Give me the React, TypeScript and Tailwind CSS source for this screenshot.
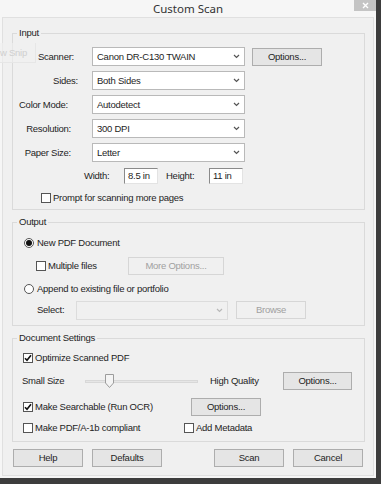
import React from "react";

type BoxProps = { checked?: boolean };

const CheckBox = ({ checked }: BoxProps) => (
	<span className="w-[10px] h-[10px] border border-[#555] bg-white flex items-center justify-center shrink-0">
		{checked && (
			<svg width="8" height="8" viewBox="0 0 8 8">
				<path d="M1 4.2 L3 6.3 L7 1.2" fill="none" stroke="#111" strokeWidth="1.6" />
			</svg>
		)}
	</span>
);

const Radio = ({ checked }: BoxProps) => (
	<span className="w-[10px] h-[10px] rounded-full border border-[#555] bg-white flex items-center justify-center shrink-0">
		{checked && <span className="w-[6px] h-[6px] rounded-full bg-[#111]" />}
	</span>
);

const Chevron = ({ muted }: { muted?: boolean }) => (
	<svg width="7" height="5" viewBox="0 0 7 5">
		<path d="M1 1 L3.5 3.5 L6 1" fill="none" stroke={muted ? "#b8b8b8" : "#555"} strokeWidth="1.2" />
	</svg>
);

const Select = ({ value, width, disabled }: { value: string; width: string; disabled?: boolean }) => (
	<div
		className={`${width} h-[19px] flex items-center justify-between pl-[4px] pr-[4px] border ${
			disabled ? "border-[#dcdcdc] bg-[#f0f0f0]" : "border-[#b9b9b9] bg-white"
		}`}
	>
		<span>{value}</span>
		<Chevron muted={disabled} />
	</div>
);

const Button = ({ label, width, disabled }: { label: string; width: string; disabled?: boolean }) => (
	<div
		className={`${width} h-[18px] flex items-center justify-center border ${
			disabled ? "border-[#d6d6d6] bg-[#f0f0f0] text-[#a0a0a0]" : "border-[#adadad] bg-[#e5e5e5] text-[#1e1e1e]"
		}`}
	>
		{label}
	</div>
);

const Group = ({ title, height, children }: { title: string; height: string; children: React.ReactNode }) => (
	<div className={`relative ${height} border border-[#dadada] flex flex-col`}>
		<span className="absolute -top-[8px] left-[4px] px-[2px] bg-[#f0f0f0] leading-[14px]">{title}</span>
		{children}
	</div>
);

const rows = [
	{ label: "Scanner:", value: "Canon DR-C130 TWAIN", pr: "pr-[18px]" },
	{ label: "Sides:", value: "Both Sides", pr: "pr-[14px]" },
	{ label: "Color Mode:", value: "Autodetect", pr: "pr-[24px]" },
	{ label: "Resolution:", value: "300 DPI", pr: "pr-[21px]" },
	{ label: "Paper Size:", value: "Letter", pr: "pr-[21px]" },
];

const App = () => {
	return (
		<div className="w-[381px] h-[484px] relative overflow-hidden flex flex-col bg-[#f6f6f6] border-r-[5px] border-b-[6px] border-[#3d3d3d] text-[9.5px] leading-[12px] text-[#1e1e1e] font-['Liberation_Sans','Noto_Sans',sans-serif] tracking-[-0.25px] whitespace-nowrap">
			<div className="h-[17px] relative flex items-center justify-center">
				<span className="text-[11.5px] text-[#333] tracking-normal font-['Noto_Sans',sans-serif]">Custom Scan</span>
				<div className="absolute right-0 top-0 w-[22px] h-[11px] bg-[#c4c4c4] flex items-center justify-center">
					<svg width="7" height="7" viewBox="0 0 7 7">
						<path d="M1 1 L6 6 M6 1 L1 6" stroke="#fff" strokeWidth="1.4" />
					</svg>
				</div>
			</div>

			<div className="flex-1 mx-[2px] mb-[2px] border border-[#e0e0e0] bg-[#f0f0f0] flex flex-col pl-[9px] pr-[8px]">
				{/* Input */}
				<div className="mt-[15px]">
					<Group title="Input" height="h-[177px]">
						<div className="pt-[13px] flex flex-col">
							{rows.map((r, i) => (
								<div key={r.label} className="flex items-center h-[19px] mb-[5px]">
									<span className={`w-[79px] text-right ${r.pr}`}>{r.label}</span>
									<Select value={r.value} width="w-[153px]" />
									{i === 0 && (
										<div className="ml-[7px]">
											<Button label="Options..." width="w-[70px]" />
										</div>
									)}
								</div>
							))}
							<div className="flex items-center h-[16px] mt-[1px]">
								<span className="ml-[71px] w-[40px]">Width:</span>
								<div className="w-[34px] h-[16px] bg-white border border-[#e3e3e3] border-t-[#8a8a8a] border-l-[#8a8a8a] pl-[3px] flex items-center">
									8.5 in
								</div>
								<span className="ml-[8px] w-[43px]">Height:</span>
								<div className="w-[34px] h-[16px] bg-white border border-[#e3e3e3] border-t-[#8a8a8a] border-l-[#8a8a8a] pl-[3px] flex items-center">
									11 in
								</div>
							</div>
							<div className="flex items-center gap-[2px] h-[12px] mt-[8px] ml-[28px]">
								<CheckBox />
								<span>Prompt for scanning more pages</span>
							</div>
						</div>
					</Group>
				</div>

				{/* Output */}
				<div className="mt-[12px]">
					<Group title="Output" height="h-[104px]">
						<div className="pt-[14px] flex flex-col">
							<div className="flex items-center gap-[3px] h-[12px] ml-[11px]">
								<Radio checked />
								<span>New PDF Document</span>
							</div>
							<div className="flex items-center h-[18px] mt-[8px] ml-[23px]">
								<CheckBox />
								<span className="ml-[2px] w-[80px]">Multiple files</span>
								<Button label="More Options..." width="w-[96px]" disabled />
							</div>
							<div className="flex items-center gap-[3px] h-[12px] mt-[8px] ml-[11px]">
								<Radio />
								<span>Append to existing file or portfolio</span>
							</div>
							<div className="flex items-center h-[18px] mt-[6px] ml-[24px]">
								<span className="w-[39px]">Select:</span>
								<Select value="" width="w-[152px]" disabled />
								<div className="ml-[8px]">
									<Button label="Browse" width="w-[70px]" disabled />
								</div>
							</div>
						</div>
					</Group>
				</div>

				{/* Document Settings */}
				<div className="mt-[12px]">
					<Group title="Document Settings" height="h-[104px]">
						<div className="pt-[13px] flex flex-col">
							<div className="flex items-center gap-[2px] h-[12px] ml-[10px]">
								<CheckBox checked />
								<span>Optimize Scanned PDF</span>
							</div>
							<div className="flex items-center h-[18px] mt-[8px] ml-[9px]">
								<span className="w-[63px]">Small Size</span>
								<div className="relative w-[113px] h-[14px] flex items-center">
									<div className="w-full h-[3px] bg-[#e6e6e6] border border-[#d8d8d8]" />
									<svg className="absolute left-[20px] top-[0px]" width="9" height="14" viewBox="0 0 9 14">
										<path d="M0.5 0.5 H8.5 V9 L4.5 13.5 L0.5 9 Z" fill="#f4f4f4" stroke="#9c9c9c" />
									</svg>
								</div>
								<span className="ml-[12px] w-[73px]">High Quality</span>
								<Button label="Options..." width="w-[69px]" />
							</div>
							<div className="flex items-center h-[18px] mt-[8px] ml-[10px]">
								<CheckBox checked />
								<span className="ml-[2px] w-[156px]">Make Searchable (Run OCR)</span>
								<Button label="Options..." width="w-[70px]" />
							</div>
							<div className="flex items-center h-[12px] mt-[6px] ml-[10px]">
								<CheckBox />
								<span className="ml-[2px] w-[149px]">Make PDF/A-1b compliant</span>
								<CheckBox />
								<span className="ml-[2px]">Add Metadata</span>
							</div>
						</div>
					</Group>
				</div>

				{/* Footer buttons */}
				<div className="flex items-center mt-[7px] ml-[1px]">
					<Button label="Help" width="w-[70px]" />
					<div className="ml-[9px]">
						<Button label="Defaults" width="w-[70px]" />
					</div>
					<div className="ml-[52px]">
						<Button label="Scan" width="w-[70px]" />
					</div>
					<div className="ml-[9px]">
						<Button label="Cancel" width="w-[70px]" />
					</div>
				</div>
			</div>

			{/* faded snipping tool remnant */}
			<div className="absolute left-0 top-[43px] w-[36px] h-[20px] border-r border-b border-[#e6e6e6] bg-[#f0f0f0]/60 flex items-end pb-[3px] text-[#cfcfcf]">
				<span>w Snip</span>
			</div>
		</div>
	);
};

export default App;
